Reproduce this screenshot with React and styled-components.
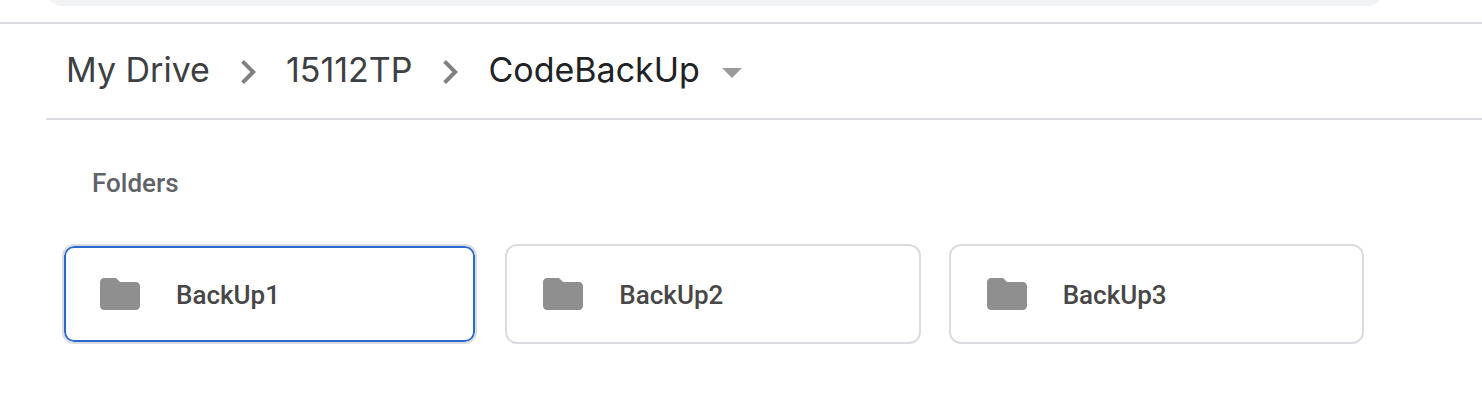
import React from "react";
import styled, { createGlobalStyle } from "styled-components";

const GlobalStyle = createGlobalStyle`
  *, *::before, *::after { box-sizing: border-box; }
  body {
    margin: 0;
    background: #fff;
    color: #3c4043;
    font-family: Roboto, "Liberation Sans", sans-serif;
  }
`;

const TopBar = styled.header`
  height: 24px;
  padding: 0 98px 0 46px;
  border-bottom: 2px solid #dadce0;
  overflow: hidden;
`;

const SearchField = styled.input`
  display: block;
  width: 100%;
  height: 32px;
  margin: -26px 0 0;
  border: 0;
  border-radius: 16px;
  background: #f1f3f4;
`;

const Breadcrumbs = styled.nav`
  margin-left: 46px;
  border-bottom: 2px solid #dadce0;
  font-family: Inter, Roboto, sans-serif;
  font-size: 34px;
  font-variant-numeric: proportional-nums;
  line-height: 44px;
`;

const Trail = styled.ol`
  display: flex;
  align-items: center;
  margin: 0;
  padding: 24px 0 22px 6px;
  list-style: none;
`;

const Crumb = styled.li`
  display: flex;
  align-items: center;
`;

const CrumbLink = styled.a`
  padding: 0 14px;
  color: #3c4043;
  text-decoration: none;
`;

const CrumbButton = styled.button`
  display: flex;
  align-items: center;
  padding: 0 0 0 14px;
  gap: 8px;
  border: 0;
  background: none;
  color: #202124;
  font: inherit;
  font-variant-numeric: inherit;
`;

const CrumbName = styled.span`
  display: block;
  padding-bottom: 4px;
  white-space: nowrap;
`;

const Icon = styled.svg`
  display: block;
  flex: none;
  width: 48px;
  height: 48px;
  fill: ${({ $color }) => $color};
`;

const Content = styled.main`
  padding: 48px 118px 72px 62px;
`;

const SectionTitle = styled.h2`
  margin: 0 0 46px;
  padding-left: 30px;
  color: #5f6368;
  font-size: 26px;
  font-weight: 500;
  line-height: 30px;
`;

const FolderGrid = styled.div`
  display: grid;
  grid-template-columns: repeat(3, minmax(0, 1fr));
  gap: 28px;
`;

const FolderCard = styled.button`
  display: flex;
  align-items: center;
  gap: 32px;
  height: 100px;
  padding: 0 32px;
  border: 2px solid #dadce0;
  border-radius: 12px;
  background: #fff;
  box-shadow: ${({ $focused }) => ($focused ? "inset 0 0 0 2px #2a68ce" : "none")};
  color: #474747;
  font-family: inherit;
  font-size: 26px;
  font-weight: 500;
  line-height: 30px;
  text-align: left;
`;

const FolderName = styled.span`
  padding-top: 2px;
`;

const ChevronIcon = () => (
  <Icon viewBox="0 0 24 24" $color="#808080" aria-hidden="true">
    <path d="M10 6 8.59 7.41 13.17 12l-4.58 4.59L10 18l6-6z" />
  </Icon>
);

const DropdownIcon = () => (
  <Icon viewBox="0 0 24 24" $color="#9a9b9e" aria-hidden="true">
    <path d="m7 10 5 5 5-5z" />
  </Icon>
);

const FolderIcon = () => (
  <Icon viewBox="0 0 24 24" $color="#8f8f8f" aria-hidden="true">
    <path d="M10 4H4c-1.1 0-1.99.9-1.99 2L2 18c0 1.1.9 2 2 2h16c1.1 0 2-.9 2-2V8c0-1.1-.9-2-2-2h-8l-2-2z" />
  </Icon>
);

const parents = ["My Drive", "15112TP"];
const folders = ["BackUp1", "BackUp2", "BackUp3"];

export default function App() {
  return (
    <>
      <GlobalStyle />
      <TopBar>
        <SearchField type="search" aria-label="Search in Drive" />
      </TopBar>
      <Breadcrumbs aria-label="Folder path">
        <Trail>
          {parents.map((name) => (
            <Crumb key={name}>
              <CrumbLink href="#">
                <CrumbName>{name}</CrumbName>
              </CrumbLink>
              <ChevronIcon />
            </Crumb>
          ))}
          <Crumb>
            <CrumbButton type="button">
              <CrumbName>CodeBackUp</CrumbName>
              <DropdownIcon />
            </CrumbButton>
          </Crumb>
        </Trail>
      </Breadcrumbs>
      <Content>
        <SectionTitle>Folders</SectionTitle>
        <FolderGrid>
          {folders.map((name, index) => (
            <FolderCard key={name} type="button" $focused={index === 0}>
              <FolderIcon />
              <FolderName>{name}</FolderName>
            </FolderCard>
          ))}
        </FolderGrid>
      </Content>
    </>
  );
}
